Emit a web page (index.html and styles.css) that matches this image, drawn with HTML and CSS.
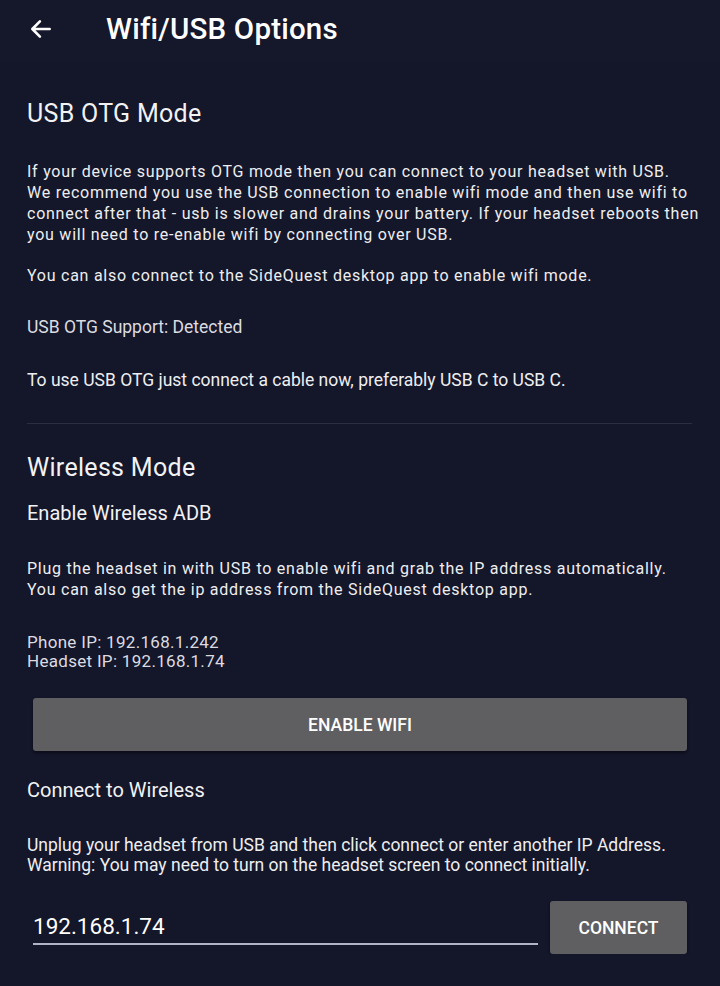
FILE: index.html
```html
<!DOCTYPE html>
<html>
<head>
<meta charset="utf-8">
<link rel="stylesheet" href="styles.css">
</head>
<body>
<header class="topbar">
  <svg class="back" width="24" height="24" viewBox="0 0 24 24"><path d="M20 12H5M11 5l-7 7 7 7" fill="none" stroke="#fff" stroke-width="2.4" stroke-linecap="round" stroke-linejoin="round"/></svg>
  <h1 class="title">Wifi/USB Options</h1>
</header>
<main class="content">
  <section class="usb">
    <h2 class="section-title">USB OTG Mode</h2>
    <p class="para first">If your device supports OTG mode then you can connect to your headset with USB.<br>We recommend you use the USB connection to enable wifi mode and then use wifi to<br>connect after that - usb is slower and drains your battery. If your headset reboots then<br>you will need to re-enable wifi by connecting over USB.</p>
    <p class="para also">You can also connect to the SideQuest desktop app to enable wifi mode.</p>
    <p class="tall status">USB OTG Support: Detected</p>
    <p class="tall cable">To use USB OTG just connect a cable now, preferably USB C to USB C.</p>
  </section>
  <hr class="divider">
  <section class="wireless">
    <h2 class="section-title">Wireless Mode</h2>
    <h3 class="sub">Enable Wireless ADB</h3>
    <p class="para plug">Plug the headset in with USB to enable wifi and grab the IP address automatically.<br>You can also get the ip address from the SideQuest desktop app.</p>
    <p class="ips">Phone IP: 192.168.1.242<br>Headset IP: 192.168.1.74</p>
    <button class="btn wide">ENABLE WIFI</button>
    <h3 class="sub tall-sub">Connect to Wireless</h3>
    <p class="tall unplug">Unplug your headset from USB and then click connect or enter another IP Address.<br>Warning: You may need to turn on the headset screen to connect initially.</p>
    <div class="connect-row">
      <div class="field">192.168.1.74</div>
      <button class="btn connect">CONNECT</button>
    </div>
  </section>
</main>
</body>
</html>
```
FILE: styles.css
```css
html, body {
  margin: 0;
  padding: 0;
  background: #14162a;
  color: #f2f2f4;
  font-family: Roboto, "Noto Sans", sans-serif;
}
.topbar {
  height: 62px;
  display: flex;
  align-items: center;
  padding-left: 28px;
  background: #15172b;
}
.back {
  width: 26px;
  height: 26px;
  margin-top: -4px;
}
.title {
  margin: -4px 0 0 52px;
  font-size: 29.5px;
  letter-spacing: 0.2px;
  font-weight: 500;
  color: #fff;
}
.content {
  padding: 0 28px 0 27px;
}
.section-title {
  margin: 0;
  font-size: 25px;
  letter-spacing: 0.3px;
  font-weight: 400;
  line-height: 30px;
}
.usb .section-title {
  margin-top: 37px;
}
.para {
  margin: 0;
  font-size: 16px;
  letter-spacing: 0.75px;
  line-height: 21px;
  color: #eeeef0;
  white-space: nowrap;
}
.para.first {
  margin-top: 32px;
}
.para.also {
  margin-top: 20px;
}
.tall {
  margin: 0;
  font-size: 17.5px;
  line-height: 21px;
  color: #eeeef0;
  white-space: nowrap;
}
.status {
  margin-top: 31px;
  color: #dcdce0;
}
.cable {
  margin-top: 32px;
}
.divider {
  border: 0;
  height: 1px;
  background: #2b2e42;
  margin: 32px 0 0 0;
}
.wireless .section-title {
  margin-top: 29px;
}
.sub {
  margin: 18px 0 0 0;
  font-size: 20px;
  font-weight: 400;
  line-height: 24px;
}
.para.plug {
  margin-top: 33px;
}
.ips {
  margin: 33px 0 0 0;
  font-size: 17px;
  letter-spacing: 0.3px;
  line-height: 19px;
  color: #dcdce0;
}
.btn {
  border: 0;
  background: #5f5f62;
  color: #fff;
  font-family: Roboto, sans-serif;
  font-weight: 500;
  font-size: 17.5px;
  border-radius: 3px;
  box-shadow: 0 2px 3px rgba(0,0,0,0.45);
  padding: 0;
}
.btn.wide {
  display: block;
  width: 654px;
  height: 53px;
  margin: 27px 0 0 6px;
}
.tall-sub {
  margin-top: 27px;
}
.unplug {
  margin-top: 33px;
  line-height: 20px;
}
.connect-row {
  display: flex;
  align-items: flex-start;
  margin-top: 26px;
  padding-left: 6px;
}
.field {
  width: 505px;
  margin-top: 10px;
  font-size: 22.5px;
  line-height: 30px;
  padding-bottom: 2px;
  border-bottom: 2px solid #b0b3c6;
  color: #fff;
}
.btn.connect {
  width: 137px;
  height: 53px;
  margin-left: 12px;
}
```
